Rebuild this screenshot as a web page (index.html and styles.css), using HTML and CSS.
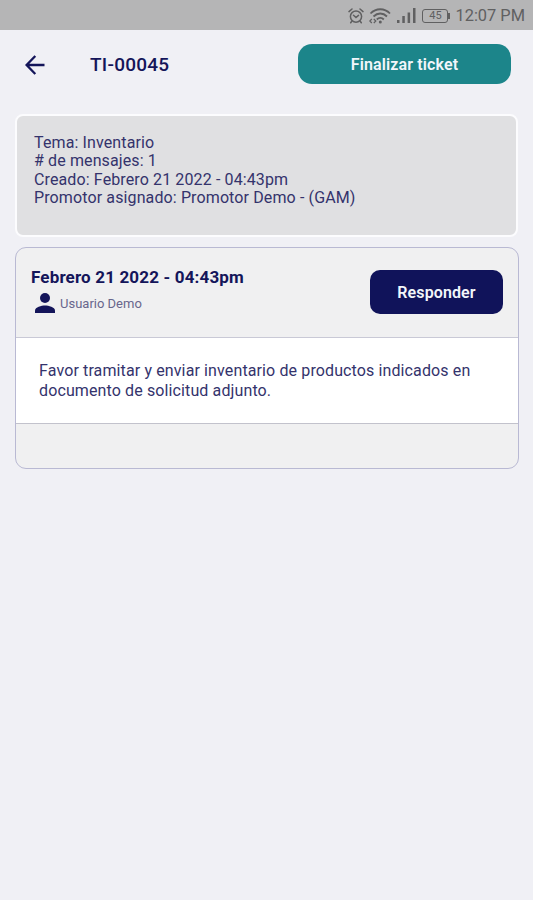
FILE: index.html
```html
<!DOCTYPE html>
<html lang="es">
<head>
<meta charset="utf-8">
<title>TI-00045</title>
<link rel="stylesheet" href="styles.css">
</head>
<body>
<div class="status">
  <svg class="alarm" width="16" height="16" viewBox="0 0 16 16" fill="none" stroke="currentColor" stroke-width="1.5" stroke-linecap="round"><circle cx="8" cy="8.600" r="5.600"/><path d="M1 3.600 4 1M15 3.600 12 1M5.500 7.200 8 9.600l2.500-2.200M4 13l-1.300 1.800M12 13l1.300 1.800"/></svg>
  <svg class="wifi" width="22" height="16" viewBox="0 0 22 16" fill="none" stroke="currentColor" stroke-width="1.800"><path d="M1.500 5.500C7-.2 15.500-.2 21 5.500M4.500 8.500c4-4 9.500-4 13.500 0M7.800 11.500c2-2 5-2 7 0"/><circle cx="11.300" cy="14" r="1.500" fill="currentColor" stroke="none"/><path d="M2.800 11 .8 13l2 2M4.800 11l2 2-2 2" stroke-width="1.200"/></svg>
  <svg class="signal" width="19" height="15" viewBox="0 0 19 15" fill="currentColor"><path d="M0 12h2.500v3H0zM5.300 8h2.500v7H5.300zM10.600 4.500h2.500V15h-2.500zM16 0h2.500v15H16z"/></svg>
  <span class="battery">45</span>
  <span class="clock">12:07 PM</span>
</div>
<header class="bar">
  <svg class="back" width="20" height="20" viewBox="0 0 20 20" fill="none" stroke="currentColor" stroke-width="2.300"><path d="M19.500 10H2M10.300 1 1.600 10l8.700 9"/></svg>
  <h1 class="title">TI-00045</h1>
  <button class="btn finish">Finalizar ticket</button>
</header>
<main class="content">
  <section class="info">
    <p>Tema: Inventario</p>
    <p># de mensajes: 1</p>
    <p>Creado: Febrero 21 2022 - 04:43pm</p>
    <p>Promotor asignado: Promotor Demo - (GAM)</p>
  </section>
  <article class="message">
    <div class="head">
      <div class="meta">
        <h2 class="date">Febrero 21 2022 - 04:43pm</h2>
        <div class="user">
          <svg width="20" height="20" viewBox="0 0 20 20" fill="currentColor"><circle cx="10" cy="5" r="5"/><path d="M0 20v-2.500C0 14 6.500 12.500 10 12.500s10 1.500 10 5V20z"/></svg>
          <span>Usuario Demo</span>
        </div>
      </div>
      <button class="btn reply">Responder</button>
    </div>
    <div class="body">Favor tramitar y enviar inventario de productos indicados en documento de solicitud adjunto.</div>
    <div class="foot"></div>
  </article>
</main>
</body>
</html>
```

FILE: styles.css
```css
* { box-sizing: border-box; margin: 0; padding: 0; }
body { width: 533px; height: 900px; background: #f0f0f5; color: #34336c; font-family: Roboto, sans-serif; font-size: 16px; letter-spacing: 0.12px; }
.status { height: 30px; padding: 1px 8px 0 0; background: #b5b5b6; color: #606061; display: flex; align-items: center; justify-content: flex-end; letter-spacing: 0; }
.wifi { margin-left: 5px; }
.signal { margin-left: 6px; }
.battery { width: 26px; height: 14px; margin: 0 7px 0 6px; border: 1.5px solid; border-radius: 3px; font-size: 11px; line-height: 12px; text-align: center; position: relative; }
.battery::after { content: ""; position: absolute; right: -3px; top: 3px; width: 2px; height: 6px; background: currentColor; }
.clock { font-size: 16.4px; }
.bar { height: 84px; padding: 14px 22px 0 25px; display: flex; align-items: flex-start; color: #14155a; }
.back { margin-top: 11px; }
.title { margin: 9px auto 0 45px; font-size: 19px; line-height: 24px; font-weight: 500; letter-spacing: 0.25px; }
.btn { border: 0; color: #f2f6fb; font-family: inherit; font-size: 16px; font-weight: 600; letter-spacing: 0.12px; }
.finish { width: 213px; height: 40px; border-radius: 14px; background: #1c858a; }
.content { padding: 0 14px 0 15px; }
.info { height: 123px; width: 503px; padding: 17.6px 17px; border: 2px solid #fcfcfe; border-radius: 8px; background: #e0e0e2; line-height: 18.5px; }
.message { margin-top: 10px; height: 222px; border: 1px solid #b9b9d3; border-radius: 11px; background: #f0f0f1; overflow: hidden; }
.head { height: 90px; border-bottom: 1px solid #c9c9d6; padding: 19px 15px 0; display: flex; justify-content: space-between; align-items: flex-start; }
.date { font-size: 17px; line-height: 20px; font-weight: 700; letter-spacing: 0.16px; color: #14155a; }
.user { display: flex; align-items: center; margin: 6px 0 0 4px; gap: 5px; color: #14155a; }
.user span { font-size: 13px; letter-spacing: 0; color: #68668c; }
.reply { width: 133px; height: 44px; margin-top: 3px; border-radius: 10px; background: #10135a; }
.body { height: 86px; padding: 23px; background: #fff; border-bottom: 1px solid #c2c2cc; line-height: 19.5px; }
```
